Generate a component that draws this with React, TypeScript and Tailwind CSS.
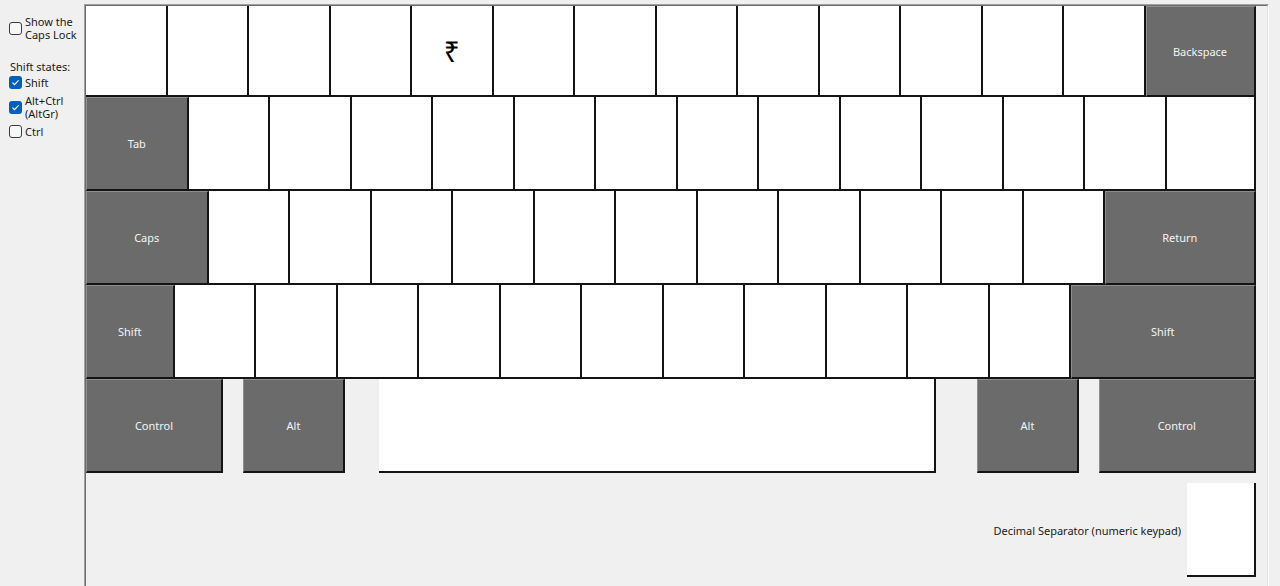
import React from 'react';

type KeyProps = {
  label?: string;
  gray?: boolean;
  className: string;
  big?: boolean;
};

function Key({ label, gray, className, big }: KeyProps) {
  return (
    <div
      className={`${className} shrink-0 flex items-center justify-center border-r-2 border-b-2 border-r-[#141414] border-b-[#141414] ${
        gray
          ? 'bg-[#6b6b6b] text-[#f4f4f4] border-t border-l border-t-[#8e8e8e] border-l-[#8e8e8e]'
          : 'bg-white text-black'
      } ${big ? 'text-[28px] leading-none' : 'text-[11px]'}`}
    >
      {label}
    </div>
  );
}

function Blank({ n }: { n: number }) {
  return (
    <>
      {Array.from({ length: n }).map((_, i) => (
        <Key key={i} className="w-[81.5px] h-full" />
      ))}
    </>
  );
}

function Check({ checked }: { checked?: boolean }) {
  if (checked) {
    return (
      <span className="flex h-[13px] w-[13px] shrink-0 items-center justify-center rounded-[3px] bg-[#005fb8]">
        <svg width="9" height="9" viewBox="0 0 9 9">
          <polyline
            points="1.5,4.6 3.5,6.6 7.6,2.4"
            fill="none"
            stroke="white"
            strokeWidth="1.2"
          />
        </svg>
      </span>
    );
  }
  return (
    <span className="block h-[13px] w-[13px] shrink-0 rounded-[3px] border border-[#3b3b3b] bg-[#f7f7f7]" />
  );
}

export default function App() {
  return (
    <div className="flex h-[586px] w-[1280px] overflow-hidden bg-[#f0f0f0] font-['Noto_Sans',sans-serif] text-[11px] leading-[13px] text-[#1a1a1a]">
      {/* Options */}
      <aside className="w-[84px] shrink-0 pl-[9px] pt-[15px]">
        <label className="flex items-center gap-[3px]">
          <Check />
          <span>
            Show the
            <br />
            Caps Lock
          </span>
        </label>

        <div className="mt-[19px] pl-[1px]">Shift states:</div>

        <label className="mt-[3px] flex items-center gap-[3px]">
          <Check checked />
          <span>Shift</span>
        </label>
        <label className="mt-[5px] flex items-center gap-[3px]">
          <Check checked />
          <span>
            Alt+Ctrl
            <br />
            (AltGr)
          </span>
        </label>
        <label className="mt-[5px] flex items-center gap-[3px]">
          <Check />
          <span>Ctrl</span>
        </label>
      </aside>

      {/* Keyboard panel */}
      <div className="mt-[4px] h-[600px] w-[1185px] shrink-0 border-l border-t border-r border-l-[#a0a0a0] border-t-[#a0a0a0] border-r-white">
        <div className="flex h-full flex-col border-l border-t border-r border-l-[#6d6d6d] border-t-[#6d6d6d] border-r-[#e3e3e3]">
          <div className="flex h-[91px]">
            <Blank n={4} />
            <Key className="w-[81.5px] h-full" label="₹" big />
            <Blank n={8} />
            <Key className="w-[110px] h-full" label="Backspace" gray />
          </div>

          <div className="flex h-[94px]">
            <Key className="w-[102.5px] h-full" label="Tab" gray />
            <Blank n={12} />
            <Key className="w-[89px] h-full" />
          </div>

          <div className="flex h-[94px]">
            <Key className="w-[122.5px] h-full" label="Caps" gray />
            <Blank n={11} />
            <Key className="w-[150.5px] h-full" label="Return" gray />
          </div>

          <div className="flex h-[94px]">
            <Key className="w-[88.5px] h-full" label="Shift" gray />
            <Blank n={11} />
            <Key className="w-[184.5px] h-full" label="Shift" gray />
          </div>

          <div className="flex h-[94px]">
            <Key className="w-[137px] h-full" label="Control" gray />
            <Key className="ml-[20px] w-[102px] h-full" label="Alt" gray />
            <Key className="ml-[34px] w-[557px] h-full" />
            <Key className="ml-[41px] w-[102px] h-full" label="Alt" gray />
            <Key className="ml-[20px] w-[156.5px] h-full" label="Control" gray />
          </div>

          <div className="mt-[10px] flex h-[94px] w-[1169.5px] items-center justify-end gap-[6px]">
            <span>Decimal Separator (numeric keypad)</span>
            <Key className="w-[68.5px] h-full" />
          </div>
        </div>
      </div>
    </div>
  );
}
